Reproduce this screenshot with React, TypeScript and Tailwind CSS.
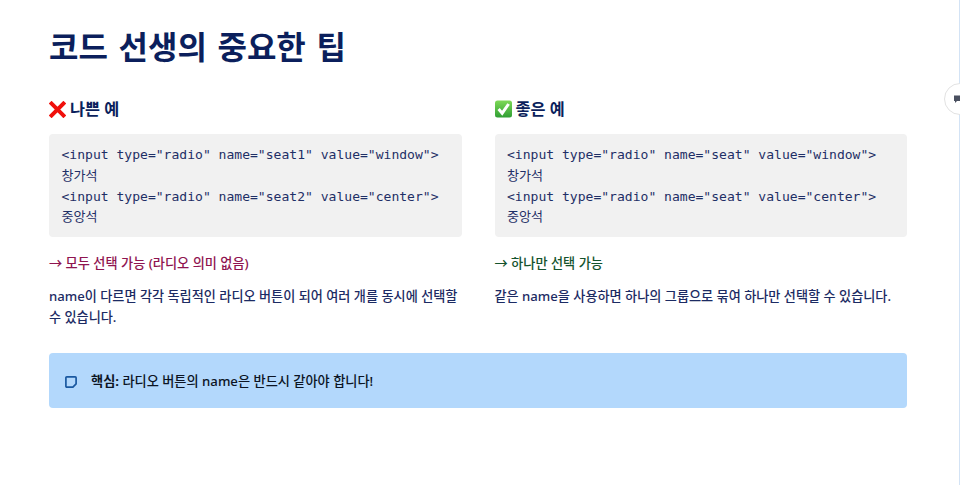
const Cross = () => (
  <svg width="17" height="17" viewBox="0 0 17 17" className="shrink-0">
    <path d="M2.6 2.6 L14.4 14.4 M14.4 2.6 L2.6 14.4" stroke="#f0100c" strokeWidth="4" strokeLinecap="square" />
  </svg>
);

const Check = () => (
  <svg width="17" height="18" viewBox="0 0 17 18" className="shrink-0">
    <defs>
      <linearGradient id="checkGreen" x1="0" y1="0" x2="0" y2="1">
        <stop offset="0" stopColor="#7ed957" />
        <stop offset="1" stopColor="#2f9e33" />
      </linearGradient>
    </defs>
    <rect x="0" y="0.5" width="17" height="17" rx="2.5" fill="url(#checkGreen)" />
    <path d="M3.6 9 L7.2 13.2 L13.6 4" fill="none" stroke="#fff" strokeWidth="3" />
  </svg>
);

const Note = () => (
  <svg width="14" height="14" viewBox="0 0 14 14" className="shrink-0">
    <path d="M2.8 1.9 H11.2 a0.9 0.9 0 0 1 0.9 0.9 V8.9 L8.9 12.1 H2.8 a0.9 0.9 0 0 1 -0.9 -0.9 V2.8 a0.9 0.9 0 0 1 0.9 -0.9 Z" fill="none" stroke="#1a58a0" strokeWidth="1.7" strokeLinejoin="round" />
  </svg>
);

const Example = ({ icon, title, seat1, seat2, result, resultColor, desc }: {
  icon: React.ReactNode;
  title: string;
  seat1: string;
  seat2: string;
  result: string;
  resultColor: string;
  desc: string;
}) => (
  <div>
    <h3 className="flex items-center gap-[4px] text-[16.3px] leading-[24px] font-semibold text-[#0b1f5c]">
      {icon}
      {title}
    </h3>
    <pre className="mt-[13px] rounded-[4px] bg-[#f1f1f1] pl-[12.5px] pr-[12.5px] pt-[11px] pb-[9px] font-['DejaVu_Sans_Mono','Noto_Sans_CJK_KR',monospace] text-[13.05px] leading-[20.8px] text-[#1f2f66] whitespace-pre-wrap">
      {`<input type="radio" name="${seat1}" value="window">\n창가석\n<input type="radio" name="${seat2}" value="center">\n중앙석`}
    </pre>
    <p className={`mt-[14px] text-[13.2px] leading-[24px] font-medium ${resultColor}`}>{result}</p>
    <p className="mt-[11px] text-[13.15px] leading-[21px] font-medium text-[#1c2b63]">{desc}</p>
  </div>
);

export default function App() {
  return (
    <div className="relative h-[485px] overflow-hidden bg-white font-['Noto_Sans','Noto_Sans_CJK_KR',sans-serif]">
      <div className="border-r border-[#d3e3f5] h-full pl-[49px] pr-[52px] pt-[23px]">
        <h1 className="text-[32px] leading-[48px] font-semibold [word-spacing:2.3px] text-[#0b1f5c]">코드 선생의 중요한 팁</h1>
        <div className="mt-[26px] grid grid-cols-2 gap-x-[33px]">
          <Example
            icon={<Cross />}
            title="나쁜 예"
            seat1="seat1"
            seat2="seat2"
            result="→ 모두 선택 가능 (라디오 의미 없음)"
            resultColor="text-[#8f1450]"
            desc="name이 다르면 각각 독립적인 라디오 버튼이 되어 여러 개를 동시에 선택할 수 있습니다."
          />
          <Example
            icon={<Check />}
            title="좋은 예"
            seat1="seat"
            seat2="seat"
            result="→ 하나만 선택 가능"
            resultColor="text-[#14532d]"
            desc="같은 name을 사용하면 하나의 그룹으로 묶여 하나만 선택할 수 있습니다."
          />
        </div>
        <div className="mt-[25px] flex h-[55px] items-center gap-[13px] rounded-[4px] bg-[#b3d8fc] px-[15px] pt-[2px] text-[13.2px] font-medium text-[#0c1424]">
          <Note />
          <p><strong className="font-bold">핵심:</strong> 라디오 버튼의 name은 반드시 같아야 합니다!</p>
        </div>
      </div>
      <div className="absolute left-[944px] top-[83px] flex h-[32px] w-[32px] items-center rounded-full border border-[#e2e2e2] bg-white pl-[8px]">
        <svg width="10" height="10" viewBox="0 0 10 10"><path d="M1 1.5 H9 V7 H4 L2 9 V7 H1 Z" fill="#4a5060" /></svg>
      </div>
    </div>
  );
}
